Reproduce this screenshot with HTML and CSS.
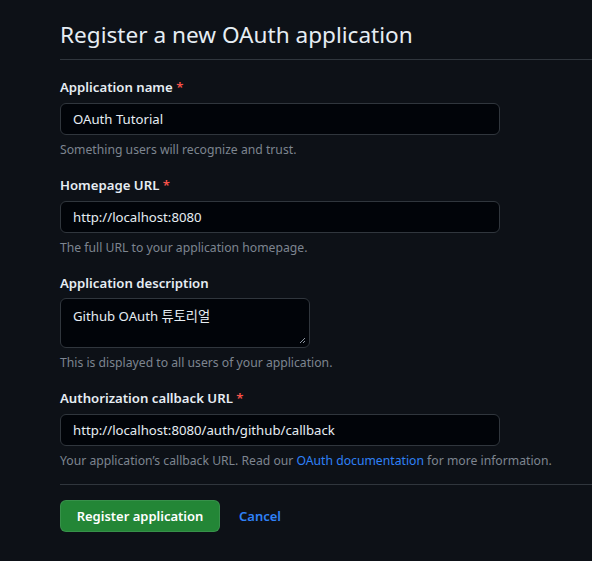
FILE: index.html
```html
<!DOCTYPE html>
<html lang="en">
<head>
<meta charset="utf-8">
<link rel="stylesheet" href="styles.css">
</head>
<body>
<div class="page">
  <div class="subhead">
    <h2 class="subhead-title">Register a new OAuth application</h2>
  </div>
  <form class="form">
    <div class="group">
      <label class="label">Application name <span class="req">*</span></label>
      <div class="input wide">OAuth Tutorial</div>
      <p class="note">Something users will recognize and trust.</p>
    </div>
    <div class="group">
      <label class="label">Homepage URL <span class="req">*</span></label>
      <div class="input wide">http://localhost:8080</div>
      <p class="note">The full URL to your application homepage.</p>
    </div>
    <div class="group">
      <label class="label label-tight">Application description</label>
      <div class="input textarea">Github OAuth 튜토리얼
        <svg class="grip" width="8" height="8" viewBox="0 0 8 8"><path d="M7 2 L2 7 M7 5 L5 7" stroke="#8b949e" stroke-width="1" fill="none"/></svg>
      </div>
      <p class="note">This is displayed to all users of your application.</p>
    </div>
    <div class="group group-last">
      <label class="label">Authorization callback URL <span class="req">*</span></label>
      <div class="input wide">http://localhost:8080/auth/github/callback</div>
      <p class="note">Your application’s callback URL. Read our <a class="link" href="#">OAuth documentation</a> for more information.</p>
    </div>
    <div class="actions">
      <button type="button" class="btn-primary">Register application</button>
      <a class="link cancel" href="#">Cancel</a>
    </div>
  </form>
</div>
</body>
</html>
```
FILE: styles.css
```css
html, body {
  margin: 0;
  padding: 0;
  background: #0d1117;
}
body {
  font-family: "Noto Sans", "Noto Sans CJK KR", sans-serif;
  color: #e6edf3;
  height: 561px;
  overflow: hidden;
}
.page {
  padding-left: 60px;
  padding-top: 17px;
}
.subhead {
  border-bottom: 1px solid #30363d;
  padding-bottom: 6px;
}
.subhead-title {
  margin: 0;
  font-size: 22.6px;
  font-weight: 400;
  line-height: 36px;
  color: #e6edf3;
}
.form {
  margin: 0;
  padding-top: 17px;
}
.group {
  margin-bottom: 16px;
}
.group-last {
  margin-bottom: 14px;
}
.label {
  display: block;
  font-size: 13.2px;
  font-weight: 600;
  line-height: 20px;
  margin-bottom: 6px;
  color: #e6edf3;
}
.label-tight {
  margin-bottom: 5px;
}
.req {
  color: #f85149;
}
.input {
  box-sizing: border-box;
  background: #010409;
  border: 1px solid #30363d;
  border-radius: 6px;
  font-size: 13.2px;
  line-height: 20px;
  padding: 5px 12px;
  color: #e6edf3;
  height: 32px;
}
.wide {
  width: 440px;
}
.textarea {
  position: relative;
  width: 250px;
  height: 50px;
  padding-top: 7px;
}
.grip {
  position: absolute;
  right: 3px;
  bottom: 3px;
}
.note {
  margin: 6px 0 0;
  font-size: 12.2px;
  line-height: 18px;
  color: #7d8590;
}
.link {
  color: #2f81f7;
  text-decoration: none;
}
.actions {
  border-top: 1px solid #30363d;
  padding-top: 15px;
  display: flex;
  align-items: center;
  gap: 19px;
}
.btn-primary {
  font-family: inherit;
  box-sizing: border-box;
  width: 160px;
  height: 32px;
  background: #238636;
  color: #ffffff;
  border: 1px solid rgba(240,246,252,0.1);
  border-radius: 6px;
  font-size: 13px;
  font-weight: 600;
  line-height: 20px;
  padding: 0;
}
.cancel {
  font-size: 13px;
  font-weight: 600;
}
```
